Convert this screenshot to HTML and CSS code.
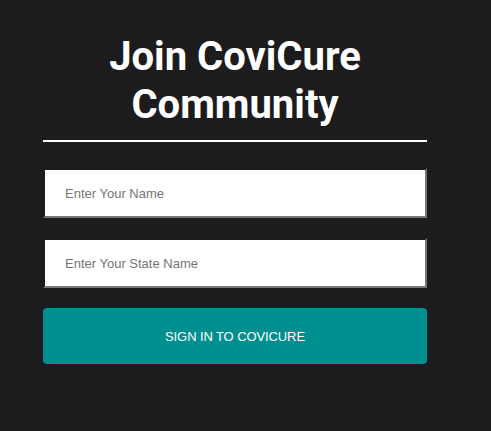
FILE: index.html
```html
<!DOCTYPE html>
<html>
<head>
<meta charset="utf-8">
<link rel="stylesheet" href="styles.css">
</head>
<body>
<div class="card">
  <h1 class="title">Join CoviCure Community</h1>
  <div class="rule"></div>
  <form class="form">
    <input class="field" type="text" placeholder="Enter Your Name">
    <input class="field" type="text" placeholder="Enter Your State Name">
    <button class="btn" type="button">SIGN IN TO COVICURE</button>
  </form>
</div>
</body>
</html>
```
FILE: styles.css
```css
html, body {
  margin: 0;
  padding: 0;
  background: #1c1c1e;
  height: 100%;
}
body {
  font-family: "Liberation Sans", Arial, sans-serif;
}
.card {
  width: 384px;
  margin-left: 43px;
  padding-top: 33px;
  display: flex;
  flex-direction: column;
}
.title {
  margin: 0;
  font-family: Roboto, "Liberation Sans", sans-serif;
  font-weight: 700;
  font-size: 40px;
  line-height: 48px;
  color: #ffffff;
  text-align: center;
}
.rule {
  height: 2px;
  background: #ffffff;
  margin-top: 11px;
}
.form {
  margin: 26px 0 0;
  display: flex;
  flex-direction: column;
  gap: 20px;
}
.field {
  box-sizing: border-box;
  width: 100%;
  height: 50px;
  margin: 0;
  border: 2px solid;
  border-color: #1b1b1b #767676 #767676 #1b1b1b;
  background: #ffffff;
  padding: 0 20px;
  font-family: "Liberation Sans", Arial, sans-serif;
  font-size: 13px;
  color: #333;
  outline: none;
}
.field::placeholder {
  color: #757575;
}
.btn {
  box-sizing: border-box;
  width: 100%;
  height: 56px;
  border: none;
  border-radius: 4px;
  background: #008f8f;
  color: #ffffff;
  font-family: "Liberation Sans", Arial, sans-serif;
  font-size: 13px;
  letter-spacing: -0.1px;
  cursor: pointer;
}
```
